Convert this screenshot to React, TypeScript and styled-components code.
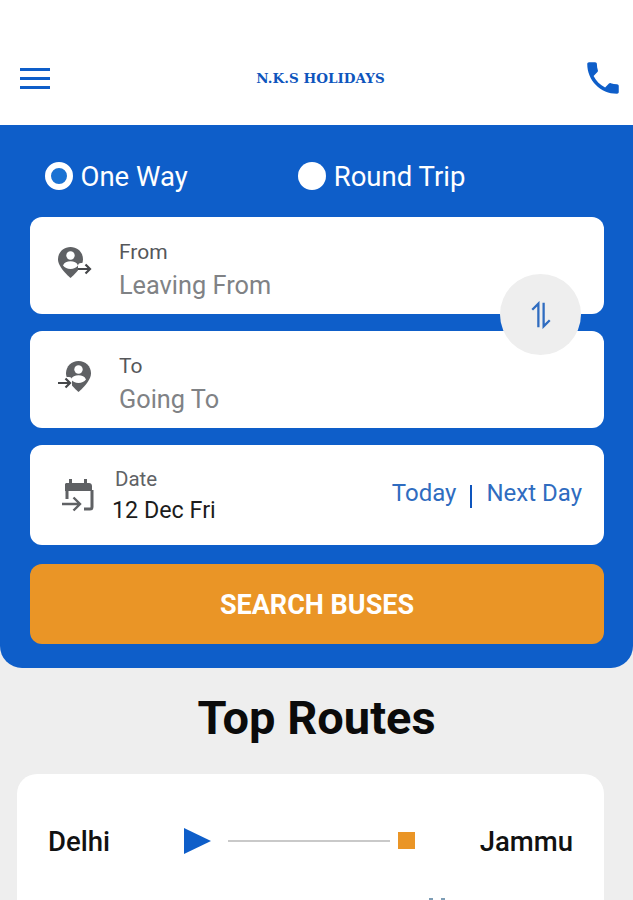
import styled, { createGlobalStyle } from "styled-components"

const GlobalStyle = createGlobalStyle`
  html, body {
    margin: 0;
    padding: 0;
    background: #eeeeee;
    font-family: Roboto, "Liberation Sans", sans-serif;
  }
  body {
    height: 900px;
    overflow: hidden;
  }
`

const PersonPin = () => (
  <svg width="25" height="31" viewBox="0 0 25 31">
    <path
      fill="#5f6164"
      d="M12.500 0C5.500 0 0 5.400 0 12.200c0 5 3.800 10.800 12.500 18.800C21.200 23 25 17.200 25 12.200 25 5.400 19.500 0 12.500 0z"
    />
    <circle cx="12.500" cy="8.500" r="4.200" fill="#fff" />
    <path fill="#fff" d="M5 18.500c1-3 4.200-4.300 7.500-4.300s6.500 1.300 7.500 4.300c-1.700 2.200-4.300 3.400-7.500 3.400S6.700 20.700 5 18.500z" />
  </svg>
)

const SmallArrow = () => (
  <svg width="14" height="12" viewBox="0 0 14 12">
    <path d="M0 6h12M7.500 1.500 12 6l-4.500 4.500" fill="none" stroke="#45474a" strokeWidth="2.200" />
  </svg>
)

const CalendarArrow = () => (
  <svg width="32" height="34" viewBox="0 0 32 34">
    <path fill="#5f6164" d="M4 5h3V1h3v4h12V1h3v4h2c1.700 0 3 1.300 3 3v5H3V6z" />
    <path d="M5 13v8M30 12v17c0 1-.7 2-2 2h-6" fill="none" stroke="#5f6164" strokeWidth="3" />
    <path d="M0 26h18M11.500 19.500 18 26l-6.500 6.500" fill="none" stroke="#5f6164" strokeWidth="2.400" />
  </svg>
)

export default function App() {
  return (
    <Page>
      <GlobalStyle />
      <Header>
        <MenuIcon>
          <span />
          <span />
          <span />
        </MenuIcon>
        <Logo>N.K.S HOLIDAYS</Logo>
        <svg width="42" height="42" viewBox="0 0 24 24">
          <path
            fill="#0e5ec9"
            d="M6.620 10.790c1.440 2.830 3.760 5.140 6.590 6.590l2.200-2.200c.27-.27.67-.36 1.020-.24 1.120.37 2.330.57 3.570.57.550 0 1 .45 1 1V20c0 .55-.45 1-1 1-9.390 0-17-7.610-17-17 0-.55.450-1 1-1h3.500c.55 0 1 .45 1 1 0 1.250.2 2.450.57 3.570.11.350.03.740-.25 1.020l-2.200 2.200z"
          />
        </svg>
      </Header>

      <SearchPanel>
        <TripRow>
          <TripOption>
            <Radio $checked />
            One Way
          </TripOption>
          <TripOption>
            <Radio />
            Round Trip
          </TripOption>
        </TripRow>

        <Fields>
          <FieldCard>
            <PinIcon $side="right">
              <PersonPin />
              <ArrowBadge $side="right">
                <SmallArrow />
              </ArrowBadge>
            </PinIcon>
            <FieldText>
              <FieldLabel>From</FieldLabel>
              <Placeholder>Leaving From</Placeholder>
            </FieldText>
          </FieldCard>

          <SwapButton>
            <svg width="24" height="28" viewBox="0 0 26 32">
              <path
                d="M10 30V3L3 10M16 2v27l7-7"
                fill="none"
                stroke="#2f6cc0"
                strokeWidth="2.600"
              />
            </svg>
          </SwapButton>

          <FieldCard>
            <PinIcon $side="left">
              <PersonPin />
              <ArrowBadge $side="left">
                <SmallArrow />
              </ArrowBadge>
            </PinIcon>
            <FieldText>
              <FieldLabel>To</FieldLabel>
              <Placeholder>Going To</Placeholder>
            </FieldText>
          </FieldCard>

          <DateCard>
            <DateLeft>
              <CalendarArrow />
              <DateText>
                <DateLabel>Date</DateLabel>
                <DateValue>12 Dec Fri</DateValue>
              </DateText>
            </DateLeft>
            <QuickDates>
              <span>Today</span>
              <Divider />
              <span>Next Day</span>
            </QuickDates>
          </DateCard>
        </Fields>

        <SearchButton>SEARCH BUSES</SearchButton>
      </SearchPanel>

      <SectionTitle>Top Routes</SectionTitle>

      <RouteCard>
        <RouteRow>
          <CityName>Delhi</CityName>
          <RouteLine>
            <PlayMark />
            <Line />
            <StopMark />
          </RouteLine>
          <CityName>Jammu</CityName>
        </RouteRow>
        <CutOffMarks>
          <span />
          <span />
        </CutOffMarks>
      </RouteCard>
    </Page>
  )
}

const Page = styled.div`
  width: 633px;
  height: 900px;
  overflow: hidden;
  background: #eeeeee;
`

const Header = styled.header`
  height: 125px;
  box-sizing: border-box;
  padding: 31px 9px 0 20px;
  background: #ffffff;
  display: flex;
  align-items: center;
  justify-content: space-between;
`

const MenuIcon = styled.div`
  width: 30px;
  display: flex;
  flex-direction: column;
  gap: 6px;

  span {
    display: block;
    height: 3px;
    background: #0e5ec9;
  }
`

const Logo = styled.div`
  margin-left: 9px;
  font-family: "DejaVu Serif", "Liberation Serif", serif;
  font-weight: 700;
  font-size: 13.500px;
  color: #0e55bd;
`

const SearchPanel = styled.section`
  height: 543px;
  box-sizing: border-box;
  padding: 0 29px 0 30px;
  background: #0e5ec9;
  border-radius: 0 0 22px 22px;
  display: flex;
  flex-direction: column;
`

const TripRow = styled.div`
  height: 92px;
  box-sizing: border-box;
  padding: 10px 0 0 15px;
  display: flex;
  align-items: center;
  gap: 110.500px;
`

const TripOption = styled.label`
  display: flex;
  align-items: center;
  gap: 7.500px;
  font-size: 27.500px;
  color: #ffffff;
`

const Radio = styled.span<{ $checked?: boolean }>`
  width: 28px;
  height: 28px;
  box-sizing: border-box;
  border-radius: 50%;
  background: ${({ $checked }) => ($checked ? "#1a72d3" : "#ffffff")};
  border: ${({ $checked }) => ($checked ? "6px solid #ffffff" : "none")};
`

const Fields = styled.div`
  position: relative;
  display: flex;
  flex-direction: column;
  gap: 17px;
`

const FieldCard = styled.div`
  height: 97px;
  box-sizing: border-box;
  padding-left: 28px;
  background: #ffffff;
  border-radius: 12px;
  display: flex;
  align-items: center;
  gap: 28px;
`

const PinIcon = styled.div<{ $side: "left" | "right" }>`
  position: relative;
  width: 33px;
  height: 31px;
  margin-bottom: 7px;
  display: flex;
  justify-content: ${({ $side }) => ($side === "right" ? "flex-start" : "flex-end")};
`

const ArrowBadge = styled.span<{ $side: "left" | "right" }>`
  position: absolute;
  top: 16px;
  ${({ $side }) => ($side === "right" ? "left: 20px;" : "left: 0;")}
  display: flex;
  background: #ffffff;
  border-radius: 3px;
`

const FieldText = styled.div`
  display: flex;
  flex-direction: column;
  gap: 7px;
  padding-top: 10px;
`

const FieldLabel = styled.div`
  font-size: 21px;
  line-height: 24px;
  color: #55575a;
`

const Placeholder = styled.div`
  font-size: 25.300px;
  line-height: 30px;
  color: #808285;
`

const SwapButton = styled.div`
  position: absolute;
  top: 57px;
  right: 23px;
  width: 81px;
  height: 81px;
  border-radius: 50%;
  background: #eeeeee;
  display: flex;
  align-items: center;
  justify-content: center;
`

const DateCard = styled.div`
  height: 100px;
  box-sizing: border-box;
  padding: 0 22px 0 32px;
  background: #ffffff;
  border-radius: 12px;
  display: flex;
  align-items: center;
  justify-content: space-between;
`

const DateLeft = styled.div`
  display: flex;
  align-items: center;
  gap: 18px;
`

const DateText = styled.div`
  display: flex;
  flex-direction: column;
  gap: 6px;
`

const DateLabel = styled.div`
  margin-left: 3px;
  font-size: 20.500px;
  line-height: 24px;
  color: #606265;
`

const DateValue = styled.div`
  font-size: 23.300px;
  line-height: 27px;
  color: #1c1c1c;
`

const QuickDates = styled.div`
  display: flex;
  align-items: center;
  gap: 14px;
  margin-bottom: 4px;
  font-size: 24px;
  color: #2f6cc0;
`

const Divider = styled.span`
  width: 2px;
  height: 23px;
  margin-top: 6px;
  background: #0e55bd;
`

const SearchButton = styled.button`
  margin-top: 19px;
  height: 80px;
  padding: 2px 0 0;
  border: none;
  border-radius: 12px;
  background: #ea9526;
  color: #ffffff;
  font-family: inherit;
  font-weight: 700;
  font-size: 27px;
`

const SectionTitle = styled.h1`
  margin: 0;
  height: 106px;
  box-sizing: border-box;
  padding-top: 22px;
  text-align: center;
  font-size: 47px;
  line-height: 56px;
  font-weight: 700;
  color: #0b0b0b;
`

const RouteCard = styled.section`
  margin: 0 29px 0 17px;
  height: 200px;
  box-sizing: border-box;
  padding: 50px 31px 0;
  background: #ffffff;
  border-radius: 20px;
`

const RouteRow = styled.div`
  display: flex;
  align-items: center;
  justify-content: space-between;
`

const CityName = styled.span`
  font-size: 27.500px;
  line-height: 36px;
  font-weight: 500;
  color: #111111;
`

const RouteLine = styled.div`
  display: flex;
  align-items: center;
  gap: 8px;
  margin: 0 0 3px 9px;
`

const PlayMark = styled.span`
  width: 0;
  height: 0;
  margin-right: 9px;
  border-left: 27px solid #0e5ec9;
  border-top: 13px solid transparent;
  border-bottom: 13px solid transparent;
`

const Line = styled.span`
  width: 162px;
  height: 2px;
  background: #c9c9c9;
`

const StopMark = styled.span`
  width: 17px;
  height: 17px;
  background: #ea9526;
`

const CutOffMarks = styled.div`
  display: flex;
  gap: 8px;
  margin: 38px 0 0 381px;

  span {
    width: 4px;
    height: 2px;
    background: #7d9db5;
  }
`
